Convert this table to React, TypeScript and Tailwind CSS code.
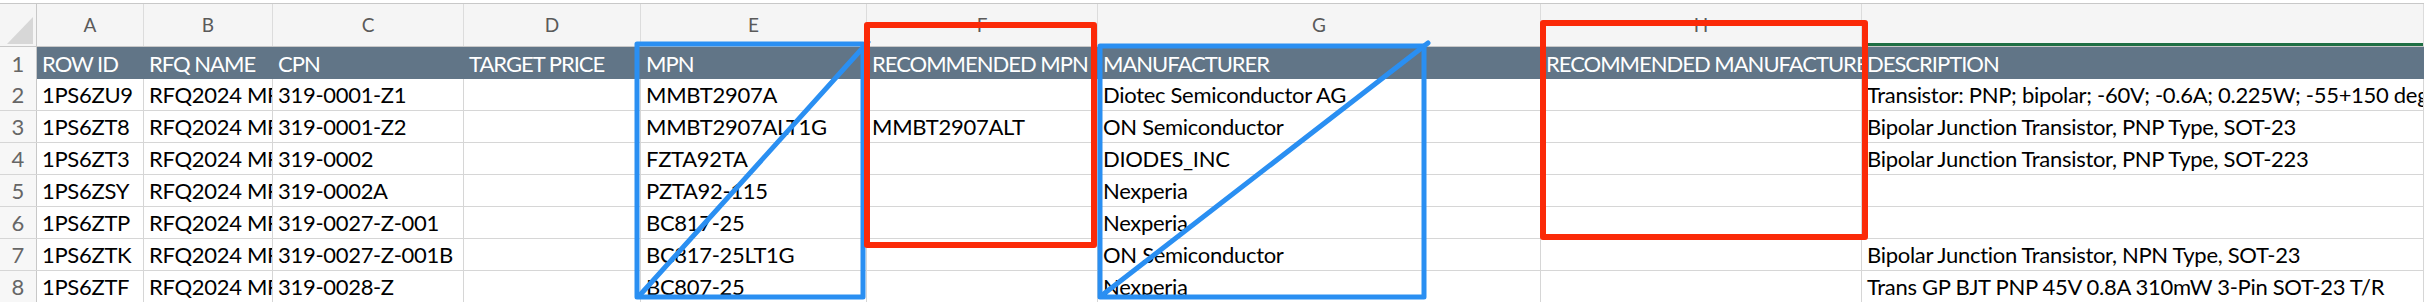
import React from "react";

const HEADERS = [
  "ROW ID",
  "RFQ NAME",
  "CPN",
  "TARGET PRICE",
  "MPN",
  "RECOMMENDED MPN",
  "MANUFACTURER",
  "RECOMMENDED MANUFACTURER",
  "DESCRIPTION",
];

const ROWS = [
  ["1PS6ZU9", "RFQ2024 MFG", "319-0001-Z1", "", "MMBT2907A", "", "Diotec Semiconductor AG", "", "Transistor: PNP; bipolar; -60V; -0.6A; 0.225W; -55+150 degC; SOT-23"],
  ["1PS6ZT8", "RFQ2024 MFG", "319-0001-Z2", "", "MMBT2907ALT1G", "MMBT2907ALT", "ON Semiconductor", "", "Bipolar Junction Transistor, PNP Type, SOT-23"],
  ["1PS6ZT3", "RFQ2024 MFG", "319-0002", "", "FZTA92TA", "", "DIODES_INC", "", "Bipolar Junction Transistor, PNP Type, SOT-223"],
  ["1PS6ZSY", "RFQ2024 MFG", "319-0002A", "", "PZTA92-115", "", "Nexperia", "", ""],
  ["1PS6ZTP", "RFQ2024 MFG", "319-0027-Z-001", "", "BC817-25", "", "Nexperia", "", ""],
  ["1PS6ZTK", "RFQ2024 MFG", "319-0027-Z-001B", "", "BC817-25LT1G", "", "ON Semiconductor", "", "Bipolar Junction Transistor, NPN Type, SOT-23"],
  ["1PS6ZTF", "RFQ2024 MFG", "319-0028-Z", "", "BC807-25", "", "Nexperia", "", "Trans GP BJT PNP 45V 0.8A 310mW 3-Pin SOT-23 T/R"],
];

// column letters + widths (A..I)
const COLS = [
  { letter: "A", w: "w-[107px]" },
  { letter: "B", w: "w-[129px]" },
  { letter: "C", w: "w-[191px]" },
  { letter: "D", w: "w-[177px]" },
  { letter: "E", w: "w-[226px]" },
  { letter: "F", w: "w-[231px]" },
  { letter: "G", w: "w-[443px]" },
  { letter: "H", w: "w-[321px]" },
  { letter: "I", w: "flex-1" },
];

export default function App() {
  return (
    <div className="relative w-[2424px] h-[302px] overflow-hidden bg-white font-['Lato',sans-serif]">
      {/* Column letters */}
      <div className="h-[47px] pt-[3px]">
        <div className="flex h-[44px] border-t border-b border-[#c8c8c8] bg-[#f5f5f5]">
          <div className="w-[37px] shrink-0 border-r border-[#c8c8c8] flex items-end justify-end pb-[2px] pr-[3px]">
            <svg width="26" height="27" viewBox="0 0 26 27">
              <polygon points="0,27 26,27 26,0" fill="#d7d7d7" />
            </svg>
          </div>
          {COLS.map((c) => (
            <div
              key={c.letter}
              className={`${c.w} shrink-0 border-r border-[#dcdcdc] flex items-center justify-center text-[19px] text-[#5a5a5a] ${
                c.letter === "I" ? "shadow-[inset_0_-3px_0_#1f6f44]" : ""
              }`}
            >
              {c.letter === "I" ? "" : c.letter}
            </div>
          ))}
        </div>
      </div>

      {/* Row 1: table header */}
      <div className="flex h-[32px]">
        <RowNum n={1} />
        {HEADERS.map((h, i) => (
          <div
            key={i}
            className={`${COLS[i].w} shrink-0 overflow-hidden whitespace-nowrap bg-[#617587] text-white text-[22px] tracking-[-1px] leading-[26px] pl-[5px] pb-[2px] flex items-end`}
          >
            {h}
          </div>
        ))}
      </div>

      {/* Data rows */}
      {ROWS.map((row, r) => (
        <div key={r} className="flex h-[32px] border-b border-[#d6d6d6]">
          <RowNum n={r + 2} />
          {row.map((v, i) => (
            <div
              key={i}
              className={`${COLS[i].w} shrink-0 overflow-hidden whitespace-nowrap border-r border-[#d6d6d6] text-black text-[22px] tracking-[-0.3px] leading-[26px] pl-[5px] pb-[2px] flex items-end`}
            >
              {v}
            </div>
          ))}
        </div>
      ))}

      <Annotations />
    </div>
  );
}

function RowNum({ n }: { n: number }) {
  return (
    <div className="w-[37px] shrink-0 border-r border-[#c8c8c8] bg-[#f7f7f7] flex items-end justify-center pb-[2px] text-[22px] leading-[26px] text-[#666666]">
      {n}
    </div>
  );
}

// hand-drawn markup over the sheet
function Annotations() {
  return (
    <svg
      className="absolute inset-0 pointer-events-none"
      width="2424"
      height="302"
      viewBox="0 0 2424 302"
      fill="none"
      strokeLinecap="round"
      strokeLinejoin="round"
    >
      <g stroke="#2a8ff2" strokeWidth="5">
        <rect x="637" y="44" width="226" height="253" />
        <line x1="640" y1="295" x2="868" y2="42" />
        <rect x="1100" y="46" width="324" height="251" />
        <line x1="1101" y1="296" x2="1428" y2="43" />
      </g>
      <g stroke="#fb2a08" strokeWidth="6">
        <rect x="867" y="25" width="227" height="220" />
        <rect x="1543" y="23" width="322" height="214" />
      </g>
    </svg>
  );
}
